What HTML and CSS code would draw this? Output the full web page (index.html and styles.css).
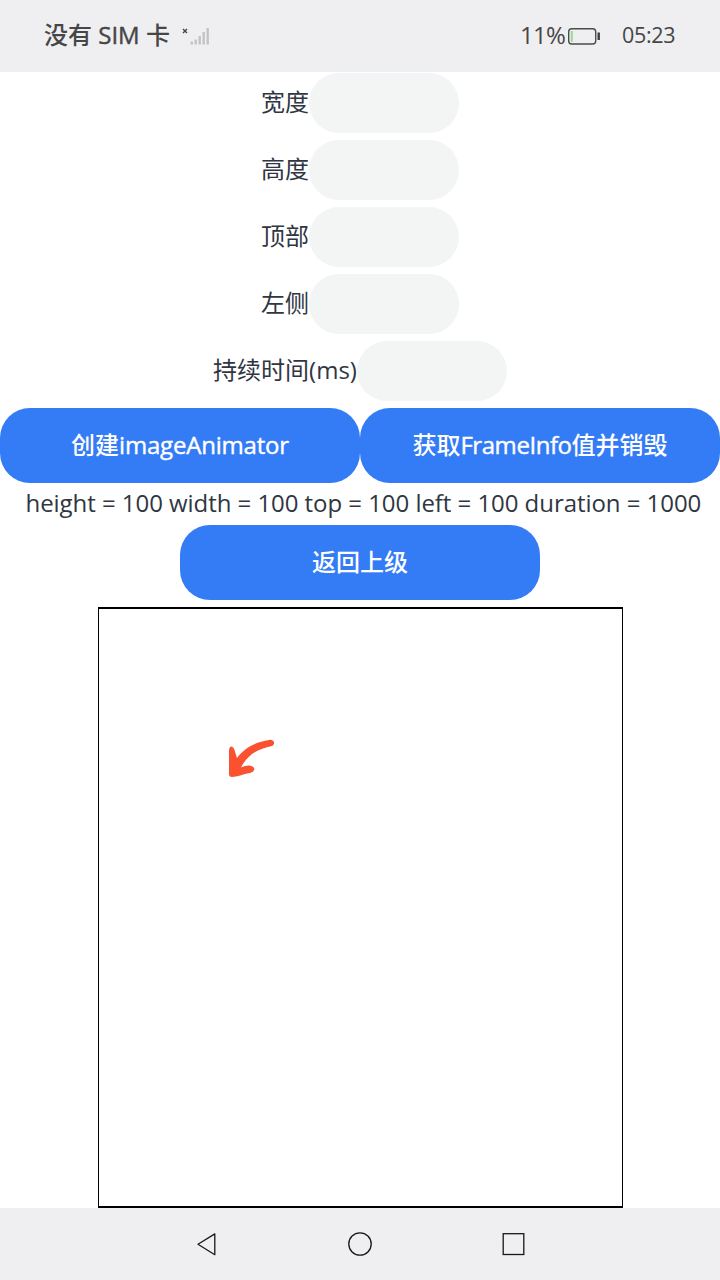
FILE: index.html
```html
<!DOCTYPE html>
<html lang="zh-CN">
<head>
<meta charset="utf-8">
<title>imageAnimator</title>
<link rel="stylesheet" href="styles.css">
</head>
<body>
<header class="status">
  <div class="carrier">
    <span class="sim">没有 <span class="medium">SIM</span> 卡</span>
    <svg class="signal" width="28" height="20" viewBox="0 0 28 20">
      <path d="M1 3l4 4M5 3l-4 4" stroke="#444" stroke-width="1.4"/>
      <path d="M9.800 15.500v3M13.700 13.500v5M17.700 10v8.500M21.700 6v12.500M25.700 2v16.500" stroke="#c2c2c3" stroke-width="2.300"/>
    </svg>
  </div>
  <div class="device">
    <span class="percent">11%</span>
    <svg class="battery" width="34" height="20" viewBox="0 0 34 20">
      <rect x="1.700" y="2.700" width="27" height="15.300" rx="3" fill="none" stroke="#4b4b4c" stroke-width="1.400"/>
      <path d="M4.800 5v10.800" stroke="#97db8d" stroke-width="2"/>
      <path d="M31.700 6.500v7.500" stroke="#3c3c3d" stroke-width="2.400"/>
    </svg>
    <span class="clock">05:23</span>
  </div>
</header>
<main class="page">
  <label class="field"><span class="name">宽度</span><input class="input" type="text"></label>
  <label class="field"><span class="name">高度</span><input class="input" type="text"></label>
  <label class="field"><span class="name">顶部</span><input class="input" type="text"></label>
  <label class="field"><span class="name">左侧</span><input class="input" type="text"></label>
  <label class="field"><span class="name">持续时间(ms)</span><input class="input" type="text"></label>
  <div class="actions">
    <button class="button">创建<span class="medium create">imageAnimator</span></button>
    <button class="button">获取<span class="medium frame">FrameInfo</span>值并销毁</button>
  </div>
  <p class="info">height = 100 width = 100 top = 100 left = 100 duration = 1000</p>
  <button class="button">返回上级</button>
  <section class="stage">
    <svg class="arrow" width="46" height="40" viewBox="0 0 46 40">
      <path d="M1 11C2 6 5 7 6.500 11L9 19C17 8 28 3 41 1C46 0 48 5 44 7C30 10 20 15 13 28.500C17 27 20 26 23 27C28 28 27 33 22 34C15 35 9 38 4 38Q1 38 1 35Z" fill="#fa5130"/>
    </svg>
  </section>
</main>
<nav class="nav">
  <svg class="nav-icons" width="720" height="72" viewBox="0 0 720 72" fill="none" stroke="#17171a" stroke-width="1.300">
    <path d="M214.800 25.900v20.800L198 36.300Z" stroke-linejoin="round"/>
    <circle cx="360" cy="36" r="11.200"/>
    <rect x="503.200" y="25.700" width="20.600" height="20.800"/>
  </svg>
</nav>
</body>
</html>
```
FILE: styles.css
```css
* { box-sizing: border-box; }
body {
  margin: 0;
  width: 720px;
  height: 1280px;
  display: flex;
  flex-direction: column;
  overflow: hidden;
  background: #fff;
  color: #303642;
  font: 24px/30px "Open Sans", "Noto Sans CJK SC", sans-serif;
}
.status {
  height: 72px;
  flex: none;
  display: flex;
  justify-content: space-between;
  padding: 0 45px 0 44px;
  background: #efeff1;
  color: #464647;
}
.carrier, .device { display: flex; align-items: center; }
.sim { width: 125px; white-space: nowrap; font-weight: 500; padding-bottom: 2px; }
.medium { -webkit-text-stroke: 0.4px currentColor; }
.signal { margin-left: 13px; }
.percent { width: 46px; letter-spacing: -0.7px; padding-bottom: 2px; }
.battery { margin-left: 1px; }
.clock { width: 53px; margin-left: 21px; font-size: 21.500px; letter-spacing: -0.3px; padding-bottom: 2px; }
.page {
  flex: 1;
  display: flex;
  flex-direction: column;
  align-items: center;
  padding-top: 1px;
}
.field {
  display: flex;
  align-items: center;
  height: 60px;
  margin-bottom: 7px;
}
.name { padding-bottom: 2px; }
.input {
  width: 150px;
  height: 60px;
  padding: 0 24px;
  border: 0;
  border-radius: 30px;
  background: #f3f5f5;
  font: inherit;
}
.actions { display: flex; }
.button {
  width: 360px;
  height: 75px;
  padding: 0 0 2px;
  border: 0;
  border-radius: 30px;
  background: #347bf6;
  color: #fff;
  font: inherit;
  font-weight: 500;
}
.create { letter-spacing: -0.2px; }
.frame { letter-spacing: -0.45px; }
.info {
  width: 675px;
  margin: 5px 0 7px 6px;
  white-space: nowrap;
  letter-spacing: -0.05px;
}
.stage {
  width: 525px;
  height: 601px;
  margin-top: 7px;
  padding: 130px 0 0 129px;
  border: solid #000;
  border-width: 2px 1px;
}
.arrow { display: block; }
.nav { flex: none; height: 72px; background: #efeff1; }
.nav-icons { display: block; }
```
